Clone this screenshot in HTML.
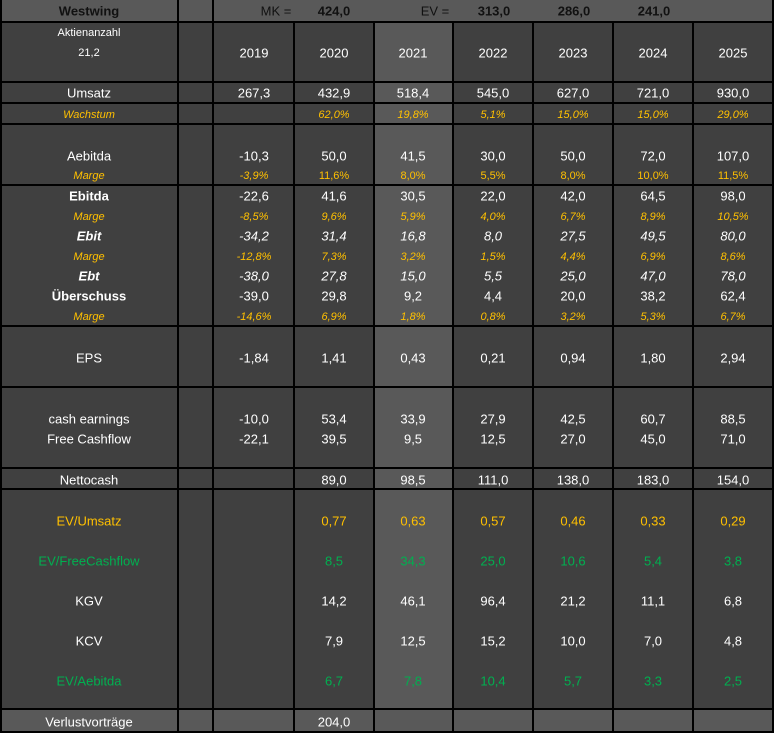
<!DOCTYPE html>
<html><head><meta charset="utf-8"><style>
*{margin:0;padding:0;box-sizing:border-box}
body{width:774px;height:733px;background:#000;position:relative;overflow:hidden;font-family:"Liberation Sans",sans-serif;font-size:13px;color:#fff}
.g{position:absolute;left:0;top:0;display:grid;grid-template-columns:175px 33px 79px 78px 77px 78px 78px 78px 78px;grid-template-rows:21px 58px 19px 19px 59px 139px 59px 79px 19px 218px 21px;column-gap:2px;row-gap:2px;padding:0 2px 2px 2px;width:774px;height:733px}
.g i{background:#404040;display:block}
.g i:nth-child(9n+8){background:#595959}
.g i:nth-child(-n+3),.g i:nth-child(n+85){background:#595959}
.g i:nth-child(3){grid-column:span 7}
s{position:absolute;transform:translate(-50%,-50%);white-space:nowrap;text-decoration:none}
.c0{left:89px}.c2{left:254px}.c3{left:334px}.c4{left:413px}.c5{left:493px}.c6{left:573px}.c7{left:653px}.c8{left:733px}
.y{color:#ffc000;font-size:11px}.it{font-style:italic}.gr{color:#00b050}.yl{color:#ffc000}
.bd{font-weight:bold}
.k{color:#111}
</style></head><body>
<div class="g">
<i></i><i></i><i></i>
<i></i><i></i><i></i><i></i><i></i><i></i><i></i><i></i><i></i>
<i></i><i></i><i></i><i></i><i></i><i></i><i></i><i></i><i></i>
<i></i><i></i><i></i><i></i><i></i><i></i><i></i><i></i><i></i>
<i></i><i></i><i></i><i></i><i></i><i></i><i></i><i></i><i></i>
<i></i><i></i><i></i><i></i><i></i><i></i><i></i><i></i><i></i>
<i></i><i></i><i></i><i></i><i></i><i></i><i></i><i></i><i></i>
<i></i><i></i><i></i><i></i><i></i><i></i><i></i><i></i><i></i>
<i></i><i></i><i></i><i></i><i></i><i></i><i></i><i></i><i></i>
<i></i><i></i><i></i><i></i><i></i><i></i><i></i><i></i><i></i>
<i></i><i></i><i></i><i></i><i></i><i></i><i></i><i></i><i></i>
</div>
<!-- top row -->
<s class="k bd c0" style="top:11px">Westwing</s>
<s class="k" style="top:11px;left:276px">MK =</s>
<s class="k bd" style="top:11px;left:334px">424,0</s>
<s class="k" style="top:11px;left:435px">EV =</s>
<s class="k bd" style="top:11px;left:494px">313,0</s>
<s class="k bd" style="top:11px;left:574px">286,0</s>
<s class="k bd" style="top:11px;left:654px">241,0</s>
<!-- header -->
<s class="c0" style="top:33px;font-size:11px">Aktienanzahl</s>
<s class="c0" style="top:53px;font-size:11px">21,2</s>
<s class="c2" style="top:53px">2019</s><s class="c3" style="top:53px">2020</s><s class="c4" style="top:53px">2021</s><s class="c5" style="top:53px">2022</s><s class="c6" style="top:53px">2023</s><s class="c7" style="top:53px">2024</s><s class="c8" style="top:53px">2025</s>
<!-- Umsatz -->
<s class="c0" style="top:93px">Umsatz</s>
<s class="c2" style="top:93px">267,3</s><s class="c3" style="top:93px">432,9</s><s class="c4" style="top:93px">518,4</s><s class="c5" style="top:93px">545,0</s><s class="c6" style="top:93px">627,0</s><s class="c7" style="top:93px">721,0</s><s class="c8" style="top:93px">930,0</s>
<s class="c0 y it" style="top:115px">Wachstum</s>
<s class="c3 y it" style="top:115px">62,0%</s><s class="c4 y it" style="top:115px">19,8%</s><s class="c5 y it" style="top:115px">5,1%</s><s class="c6 y it" style="top:115px">15,0%</s><s class="c7 y it" style="top:115px">15,0%</s><s class="c8 y it" style="top:115px">29,0%</s>
<!-- Aebitda -->
<s class="c0" style="top:156px">Aebitda</s>
<s class="c2" style="top:156px">-10,3</s><s class="c3" style="top:156px">50,0</s><s class="c4" style="top:156px">41,5</s><s class="c5" style="top:156px">30,0</s><s class="c6" style="top:156px">50,0</s><s class="c7" style="top:156px">72,0</s><s class="c8" style="top:156px">107,0</s>
<s class="c0 y it" style="top:176px">Marge</s>
<s class="c2 y it" style="top:176px">-3,9%</s><s class="c3 y" style="top:176px">11,6%</s><s class="c4 y" style="top:176px">8,0%</s><s class="c5 y" style="top:176px">5,5%</s><s class="c6 y" style="top:176px">8,0%</s><s class="c7 y" style="top:176px">10,0%</s><s class="c8 y" style="top:176px">11,5%</s>
<!-- Ebitda block -->
<s class="c0 bd" style="top:196px">Ebitda</s>
<s class="c2" style="top:196px">-22,6</s><s class="c3" style="top:196px">41,6</s><s class="c4" style="top:196px">30,5</s><s class="c5" style="top:196px">22,0</s><s class="c6" style="top:196px">42,0</s><s class="c7" style="top:196px">64,5</s><s class="c8" style="top:196px">98,0</s>
<s class="c0 y it" style="top:217px">Marge</s>
<s class="c2 y it" style="top:217px">-8,5%</s><s class="c3 y it" style="top:217px">9,6%</s><s class="c4 y it" style="top:217px">5,9%</s><s class="c5 y it" style="top:217px">4,0%</s><s class="c6 y it" style="top:217px">6,7%</s><s class="c7 y it" style="top:217px">8,9%</s><s class="c8 y it" style="top:217px">10,5%</s>
<s class="c0 bd it" style="top:236px">Ebit</s>
<s class="c2 it" style="top:236px">-34,2</s><s class="c3 it" style="top:236px">31,4</s><s class="c4 it" style="top:236px">16,8</s><s class="c5 it" style="top:236px">8,0</s><s class="c6 it" style="top:236px">27,5</s><s class="c7 it" style="top:236px">49,5</s><s class="c8 it" style="top:236px">80,0</s>
<s class="c0 y it" style="top:257px">Marge</s>
<s class="c2 y it" style="top:257px">-12,8%</s><s class="c3 y it" style="top:257px">7,3%</s><s class="c4 y it" style="top:257px">3,2%</s><s class="c5 y it" style="top:257px">1,5%</s><s class="c6 y it" style="top:257px">4,4%</s><s class="c7 y it" style="top:257px">6,9%</s><s class="c8 y it" style="top:257px">8,6%</s>
<s class="c0 bd it" style="top:276px">Ebt</s>
<s class="c2 it" style="top:276px">-38,0</s><s class="c3 it" style="top:276px">27,8</s><s class="c4 it" style="top:276px">15,0</s><s class="c5 it" style="top:276px">5,5</s><s class="c6 it" style="top:276px">25,0</s><s class="c7 it" style="top:276px">47,0</s><s class="c8 it" style="top:276px">78,0</s>
<s class="c0 bd" style="top:296px">Überschuss</s>
<s class="c2" style="top:296px">-39,0</s><s class="c3" style="top:296px">29,8</s><s class="c4" style="top:296px">9,2</s><s class="c5" style="top:296px">4,4</s><s class="c6" style="top:296px">20,0</s><s class="c7" style="top:296px">38,2</s><s class="c8" style="top:296px">62,4</s>
<s class="c0 y it" style="top:317px">Marge</s>
<s class="c2 y it" style="top:317px">-14,6%</s><s class="c3 y it" style="top:317px">6,9%</s><s class="c4 y it" style="top:317px">1,8%</s><s class="c5 y it" style="top:317px">0,8%</s><s class="c6 y it" style="top:317px">3,2%</s><s class="c7 y it" style="top:317px">5,3%</s><s class="c8 y it" style="top:317px">6,7%</s>
<!-- EPS -->
<s class="c0" style="top:358px">EPS</s>
<s class="c2" style="top:358px">-1,84</s><s class="c3" style="top:358px">1,41</s><s class="c4" style="top:358px">0,43</s><s class="c5" style="top:358px">0,21</s><s class="c6" style="top:358px">0,94</s><s class="c7" style="top:358px">1,80</s><s class="c8" style="top:358px">2,94</s>
<!-- cash -->
<s class="c0" style="top:419px">cash earnings</s>
<s class="c2" style="top:419px">-10,0</s><s class="c3" style="top:419px">53,4</s><s class="c4" style="top:419px">33,9</s><s class="c5" style="top:419px">27,9</s><s class="c6" style="top:419px">42,5</s><s class="c7" style="top:419px">60,7</s><s class="c8" style="top:419px">88,5</s>
<s class="c0" style="top:439px">Free Cashflow</s>
<s class="c2" style="top:439px">-22,1</s><s class="c3" style="top:439px">39,5</s><s class="c4" style="top:439px">9,5</s><s class="c5" style="top:439px">12,5</s><s class="c6" style="top:439px">27,0</s><s class="c7" style="top:439px">45,0</s><s class="c8" style="top:439px">71,0</s>
<!-- Nettocash -->
<s class="c0" style="top:480px">Nettocash</s>
<s class="c3" style="top:480px">89,0</s><s class="c4" style="top:480px">98,5</s><s class="c5" style="top:480px">111,0</s><s class="c6" style="top:480px">138,0</s><s class="c7" style="top:480px">183,0</s><s class="c8" style="top:480px">154,0</s>
<!-- ratios -->
<s class="c0 yl" style="top:521px">EV/Umsatz</s>
<s class="c3 yl" style="top:521px">0,77</s><s class="c4 yl" style="top:521px">0,63</s><s class="c5 yl" style="top:521px">0,57</s><s class="c6 yl" style="top:521px">0,46</s><s class="c7 yl" style="top:521px">0,33</s><s class="c8 yl" style="top:521px">0,29</s>
<s class="c0 gr" style="top:561px">EV/FreeCashflow</s>
<s class="c3 gr" style="top:561px">8,5</s><s class="c4 gr" style="top:561px">34,3</s><s class="c5 gr" style="top:561px">25,0</s><s class="c6 gr" style="top:561px">10,6</s><s class="c7 gr" style="top:561px">5,4</s><s class="c8 gr" style="top:561px">3,8</s>
<s class="c0" style="top:601px">KGV</s>
<s class="c3" style="top:601px">14,2</s><s class="c4" style="top:601px">46,1</s><s class="c5" style="top:601px">96,4</s><s class="c6" style="top:601px">21,2</s><s class="c7" style="top:601px">11,1</s><s class="c8" style="top:601px">6,8</s>
<s class="c0" style="top:641px">KCV</s>
<s class="c3" style="top:641px">7,9</s><s class="c4" style="top:641px">12,5</s><s class="c5" style="top:641px">15,2</s><s class="c6" style="top:641px">10,0</s><s class="c7" style="top:641px">7,0</s><s class="c8" style="top:641px">4,8</s>
<s class="c0 gr" style="top:681px">EV/Aebitda</s>
<s class="c3 gr" style="top:681px">6,7</s><s class="c4 gr" style="top:681px">7,8</s><s class="c5 gr" style="top:681px">10,4</s><s class="c6 gr" style="top:681px">5,7</s><s class="c7 gr" style="top:681px">3,3</s><s class="c8 gr" style="top:681px">2,5</s>
<!-- bottom -->
<s class="c0" style="top:722px">Verlustvorträge</s>
<s class="c3" style="top:722px">204,0</s>
</body></html>
